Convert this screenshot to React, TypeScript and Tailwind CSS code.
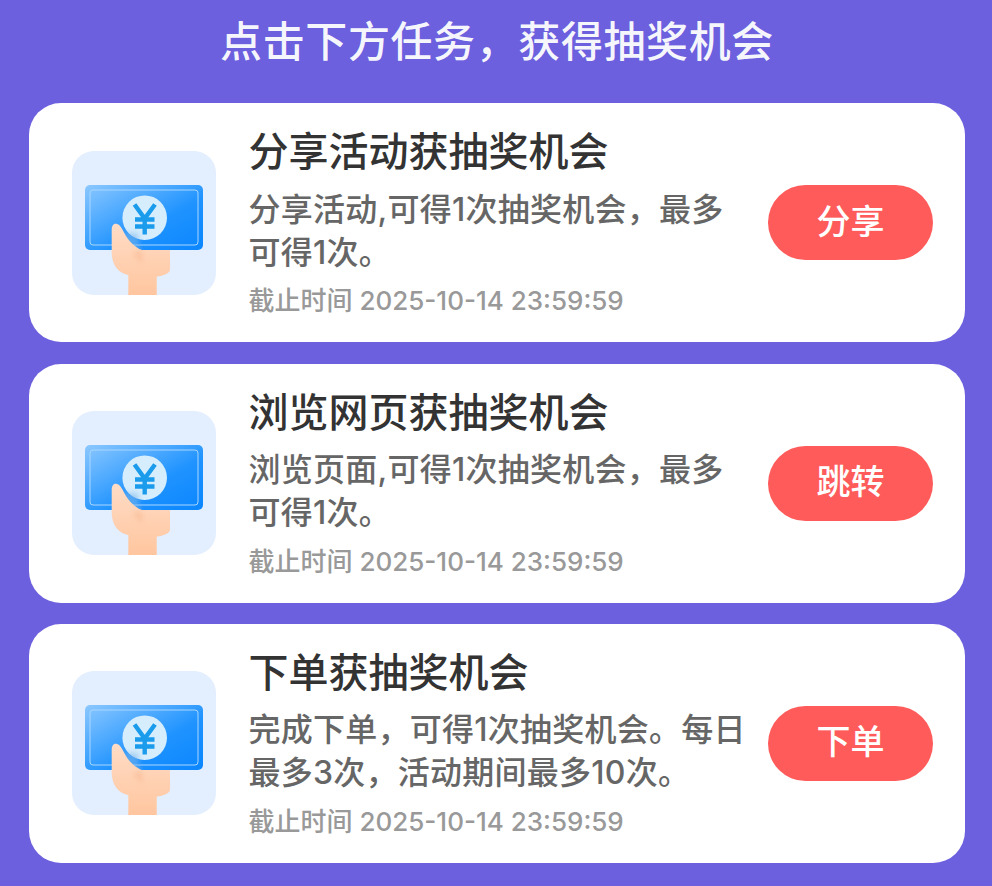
const tasks = [
  {
    title: '分享活动获抽奖机会',
    desc: ['分享活动,可得1次抽奖机会，最多', '可得1次。'],
    action: '分享',
  },
  {
    title: '浏览网页获抽奖机会',
    desc: ['浏览页面,可得1次抽奖机会，最多', '可得1次。'],
    action: '跳转',
  },
  {
    title: '下单获抽奖机会',
    desc: ['完成下单，可得1次抽奖机会。每日', '最多3次，活动期间最多10次。'],
    action: '下单',
  },
];

const MoneyIcon = ({ id }: { id: number }) => (
  <div className="w-36 h-36 shrink-0 rounded-[22px] bg-[#e3eefe] overflow-hidden">
    <svg viewBox="0 0 144 144" className="w-full h-full block">
      <defs>
        <linearGradient id={`bill-${id}`} x1="0" y1="0" x2="1" y2="1">
          <stop offset="0" stopColor="#8cc8ff" />
          <stop offset="0.6" stopColor="#1f93ff" />
          <stop offset="1" stopColor="#0a86ff" />
        </linearGradient>
        <linearGradient id={`hand-${id}`} x1="0" y1="0" x2="0" y2="1">
          <stop offset="0" stopColor="#ffdcc6" />
          <stop offset="1" stopColor="#ffc69f" />
        </linearGradient>
        <filter id={`soft-${id}`} x="-30%" y="-30%" width="160%" height="160%">
          <feGaussianBlur stdDeviation="2.5" />
        </filter>
      </defs>
      {/* Banknote */}
      <rect x="13" y="34" width="118" height="65" rx="5" fill={`url(#bill-${id})`} />
      <rect x="18" y="39" width="108" height="55" rx="3" fill="none" stroke="#a9d6ff" strokeWidth="1" />
      <circle cx="72.7" cy="66.7" r="22.3" fill="#d5edfd" />
      {/* Yen mark */}
      <path
        d="M62.5 53.5 L72.7 67.5 L83 53.5 M72.7 67.5 V83.5 M63 68.5 H82.5 M63 75.5 H82.5"
        fill="none"
        stroke="#1a9bec"
        strokeWidth="4.4"
      />
      {/* Hand */}
      <path
        d="M42 82 C46 92 60 100 68 104 L66 82 Z"
        fill="#7fb6e8"
        opacity="0.55"
        filter={`url(#soft-${id})`}
      />
      <path
        d="M56.3 144 V124 C46 122 40 114 39.7 102 L39.7 79 C39.7 73 43 72 45 73 C49 74 51 80 54 85 C58 92 66 98 70 99 H98 V119 C97 123 90 125 84.7 125.7 V144 Z"
        fill={`url(#hand-${id})`}
      />
      <path d="M69 100 C71 104 71 110 69 112 C66 109 63 105 61 102 Z" fill="#f5b48c" opacity="0.5" filter={`url(#soft-${id})`} />
    </svg>
  </div>
);

export default function App() {
  return (
    <div
      className="min-h-[886px] bg-[#6c60de] pl-[29px] pr-[27px] pt-[15px]"
      style={{ fontFamily: 'Inter, "Noto Sans CJK SC", "Noto Sans", sans-serif' }}
    >
      <h1 className="text-center text-white/95 text-[42px] leading-[54px] font-medium h-[88.3px] tracking-[0.6px]">
        点击下方任务，获得抽奖机会
      </h1>
      <div className="flex flex-col gap-[21.3px]">
        {tasks.map((task, i) => (
          <div key={task.action} className="h-[239px] bg-white rounded-[32px] flex items-center pl-[43px] pr-8">
            <MoneyIcon id={i} />
            <div className="w-[519px] ml-[32.5px] shrink-0">
              <div className="text-[40px] leading-[52px] font-medium text-[#333333]">{task.title}</div>
              <div className="mt-[9.5px] text-[32px] leading-[43px] tracking-[0.25px] font-medium text-[#666666] whitespace-nowrap">
                {task.desc.map(line => (
                  <div key={line}>{line}</div>
                ))}
              </div>
              <div className="mt-[9.5px] text-[26px] leading-[36px] font-medium text-[#999999] whitespace-nowrap">
                截止时间 2025-10-14 23:59:59
              </div>
            </div>
            <button className="w-[165px] h-[75px] shrink-0 ml-auto pb-[3px] rounded-full bg-[#ff5b5b] text-white text-[34px] font-medium">
              {task.action}
            </button>
          </div>
        ))}
      </div>
    </div>
  );
}
